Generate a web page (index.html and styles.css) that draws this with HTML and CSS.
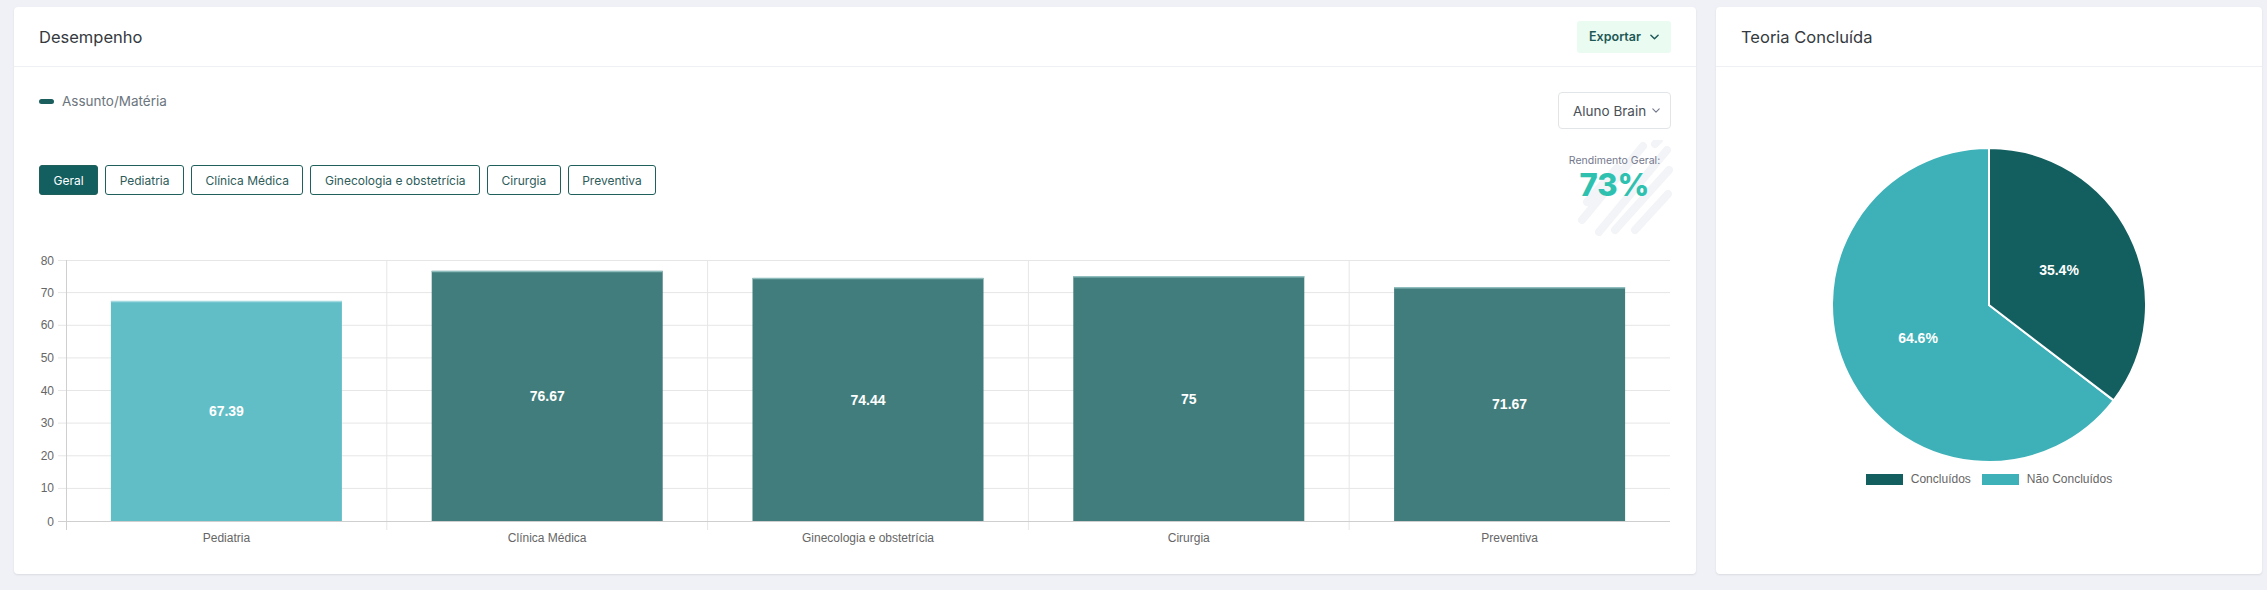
FILE: index.html
```html
<!DOCTYPE html>
<html lang="pt-BR">

<head>
    <meta charset="UTF-8" />
    <meta name="viewport" content="width=device-width, initial-scale=1.0" />
    <title>Desempenho</title>
    <link rel="stylesheet" href="styles.css">
</head>

<body>
    <div class="page">

        <!-- desempenho card -->
        <div class="card card-main">
            <div class="card-header">
                <h4 class="card-title">Desempenho</h4>
                <button class="export-btn">Exportar
                    <svg class="chevron" viewBox="0 0 10 6" width="9" height="6">
                        <path d="M1 1l4 4 4-4" fill="none" stroke="currentColor" stroke-width="1.6" stroke-linecap="round" stroke-linejoin="round" />
                    </svg>
                </button>
            </div>

            <div class="card-body">
                <div class="filters">
                    <div class="filters-left">
                        <div class="legend-item"><span class="legend-dash"></span>Assunto/Matéria</div>
                        <div class="subject-tabs">
                            <button class="tab-btn active">Geral</button>
                            <button class="tab-btn">Pediatria</button>
                            <button class="tab-btn">Clínica Médica</button>
                            <button class="tab-btn">Ginecologia e obstetrícia</button>
                            <button class="tab-btn">Cirurgia</button>
                            <button class="tab-btn">Preventiva</button>
                        </div>
                    </div>

                    <div class="filters-right">
                        <div class="student-select">Aluno Brain
                            <svg class="chevron" viewBox="0 0 10 6" width="8" height="5">
                                <path d="M1 1l4 4 4-4" fill="none" stroke="currentColor" stroke-width="1.4" stroke-linecap="round" stroke-linejoin="round" />
                            </svg>
                        </div>
                        <div class="score">
                            <!-- decorative brush strokes behind the score -->
                            <svg class="score-bg" viewBox="0 0 100 96" width="100" height="96">
                                <g stroke="#f3f4f7" stroke-width="8" stroke-linecap="round">
                                    <line x1="14" y1="62" x2="44" y2="28" />
                                    <line x1="9" y1="80" x2="70" y2="6" />
                                    <line x1="26" y1="92" x2="94" y2="10" />
                                    <line x1="42" y1="90" x2="96" y2="30" />
                                    <line x1="62" y1="90" x2="95" y2="54" />
                                    <line x1="82" y1="4" x2="86" y2="0" />
                                </g>
                            </svg>
                            <span class="score-label">Rendimento Geral:</span>
                            <span class="score-value">73%</span>
                        </div>
                    </div>
                </div>

                <svg class="bar-chart" width="1632" height="310" viewBox="0 0 1632 310">
                    <!-- horizontal grid -->
                    <g stroke="#e6e6e6" stroke-width="1">
                        <line x1="19" y1="15.5" x2="1631" y2="15.5" />
                        <line x1="19" y1="47.6" x2="1631" y2="47.6" />
                        <line x1="19" y1="80.3" x2="1631" y2="80.3" />
                        <line x1="19" y1="112.9" x2="1631" y2="112.9" />
                        <line x1="19" y1="145.5" x2="1631" y2="145.5" />
                        <line x1="19" y1="178.1" x2="1631" y2="178.1" />
                        <line x1="19" y1="210.8" x2="1631" y2="210.8" />
                        <line x1="19" y1="243.4" x2="1631" y2="243.4" />
                    </g>
                    <!-- vertical grid -->
                    <g stroke="#e6e6e6" stroke-width="1">
                        <line x1="347.8" y1="15" x2="347.8" y2="285" />
                        <line x1="668.6" y1="15" x2="668.6" y2="285" />
                        <line x1="989.4" y1="15" x2="989.4" y2="285" />
                        <line x1="1310.2" y1="15" x2="1310.2" y2="285" />
                    </g>
                    <!-- axes -->
                    <g stroke="#cfcfcf" stroke-width="1">
                        <line x1="27.5" y1="15" x2="27.5" y2="285" />
                        <line x1="19" y1="276.5" x2="1631" y2="276.5" />
                    </g>

                    <!-- y labels -->
                    <g class="axis-label" text-anchor="end">
                        <text x="15" y="19.5">80</text>
                        <text x="15" y="51.6">70</text>
                        <text x="15" y="84.3">60</text>
                        <text x="15" y="116.9">50</text>
                        <text x="15" y="149.5">40</text>
                        <text x="15" y="182.1">30</text>
                        <text x="15" y="214.8">20</text>
                        <text x="15" y="247.4">10</text>
                        <text x="15" y="280.5">0</text>
                    </g>

                    <!-- bars -->
                    <rect x="71.9" y="56.1" width="231" height="219.9" fill="#62bec6" />
                    <line x1="71.9" y1="56.6" x2="302.9" y2="56.6" stroke="#a3dbe0" stroke-width="1.5" />
                    <rect x="392.7" y="25.9" width="231" height="250.1" fill="#417d7c" />
                    <line x1="392.7" y1="26.4" x2="623.7" y2="26.4" stroke="#8fbcbc" stroke-width="1.5" />
                    <rect x="713.5" y="33.1" width="231" height="242.9" fill="#417d7c" />
                    <line x1="713.5" y1="33.6" x2="944.5" y2="33.6" stroke="#8fbcbc" stroke-width="1.5" />
                    <rect x="1034.3" y="31.3" width="231" height="244.7" fill="#417d7c" />
                    <line x1="1034.3" y1="31.8" x2="1265.3" y2="31.8" stroke="#8fbcbc" stroke-width="1.5" />
                    <rect x="1355.1" y="42.2" width="231" height="233.8" fill="#417d7c" />
                    <line x1="1355.1" y1="42.7" x2="1586.1" y2="42.7" stroke="#8fbcbc" stroke-width="1.5" />

                    <!-- bar values -->
                    <g class="bar-value" text-anchor="middle">
                        <text x="187.4" y="171">67.39</text>
                        <text x="508.2" y="156">76.67</text>
                        <text x="829" y="159.6">74.44</text>
                        <text x="1149.8" y="158.7">75</text>
                        <text x="1470.6" y="164">71.67</text>
                    </g>

                    <!-- x labels -->
                    <g class="axis-label" text-anchor="middle">
                        <text x="187.4" y="297">Pediatria</text>
                        <text x="508.2" y="297">Clínica Médica</text>
                        <text x="829" y="297">Ginecologia e obstetrícia</text>
                        <text x="1149.8" y="297">Cirurgia</text>
                        <text x="1470.6" y="297">Preventiva</text>
                    </g>
                </svg>
            </div>
        </div>

        <!-- teoria card -->
        <div class="card card-side">
            <div class="card-header">
                <h4 class="card-title">Teoria Concluída</h4>
            </div>

            <div class="pie-body">
                <svg class="pie-chart" width="318" height="318" viewBox="0 0 318 318">
                    <path d="M159 159 L283.7 254.4 A157 157 0 1 1 159 2 Z" fill="#3eb1b8" stroke="#fff" stroke-width="2" stroke-linejoin="round" />
                    <path d="M159 159 L159 2 A157 157 0 0 1 283.7 254.4 Z" fill="#135f60" stroke="#fff" stroke-width="2" stroke-linejoin="round" />
                    <g class="pie-value" text-anchor="middle">
                        <text x="229" y="129">35.4%</text>
                        <text x="88" y="197">64.6%</text>
                    </g>
                </svg>

                <div class="pie-legend">
                    <span class="pie-legend-item"><span class="legend-box dark"></span>Concluídos</span>
                    <span class="pie-legend-item"><span class="legend-box light"></span>Não Concluídos</span>
                </div>
            </div>
        </div>

    </div>
</body>

</html>
```

FILE: styles.css
```css
html,
body {
    margin: 0;
    height: 100%;
    background-color: #f0f1f6;
    font-family: Inter, "Open Sans", sans-serif;
    overflow: hidden;
}

.page {
    display: flex;
    gap: 20px;
    padding: 7px 5px 0 14px;
}

.card {
    background-color: #fff;
    border-radius: 4px;
    box-shadow: 0 1px 2px rgba(56, 65, 74, 0.12);
}

.card-main {
    flex: 0 0 1682px;
}

.card-side {
    flex: 1;
}

.card-header {
    display: flex;
    align-items: center;
    justify-content: space-between;
    height: 60px;
    padding: 0 25px;
    box-sizing: border-box;
    border-bottom: 1px solid #eef0f3;
}

.card-title {
    margin: 0;
    font-size: 16.5px;
    font-weight: 400;
    color: #343a40;
}

.export-btn {
    display: flex;
    align-items: center;
    gap: 9px;
    height: 32px;
    width: 94px;
    justify-content: center;
    background-color: #eafbf2;
    color: #1d5855;
    border: none;
    border-radius: 3px;
    font-family: inherit;
    font-size: 12.5px;
    font-weight: 600;
    cursor: pointer;
}

.card-body {
    padding: 25px 25px 19px 25px;
}

.filters {
    display: flex;
    justify-content: space-between;
    align-items: flex-start;
}

.legend-item {
    display: flex;
    align-items: center;
    gap: 8px;
    height: 18px;
    font-size: 13.5px;
    color: #6c757d;
}

.legend-dash {
    width: 15px;
    height: 5px;
    border-radius: 3px;
    background-color: #1b5e5e;
}

.subject-tabs {
    display: flex;
    gap: 7px;
    margin-top: 55px;
}

.tab-btn {
    height: 30px;
    padding: 0 13.5px;
    background-color: #fff;
    color: #2e5c5a;
    border: 1px solid #1f5f5c;
    border-radius: 3px;
    font-family: inherit;
    font-size: 12px;
    cursor: pointer;
}

.tab-btn.active {
    background-color: #135f5f;
    color: #fff;
}

.filters-right {
    width: 113px;
    display: flex;
    flex-direction: column;
    align-items: center;
}

.student-select {
    display: flex;
    align-items: center;
    justify-content: space-between;
    box-sizing: border-box;
    width: 113px;
    height: 37px;
    padding: 0 10px 0 14px;
    border: 1px solid #e2e5e8;
    border-radius: 4px;
    font-size: 13.5px;
    color: #495057;
}

.student-select .chevron {
    color: #74788d;
}

.score {
    position: relative;
    display: flex;
    flex-direction: column;
    align-items: center;
    margin-top: 24px;
}

.score-bg {
    position: absolute;
    top: -13px;
    left: 4px;
}

.score-label {
    position: relative;
    font-size: 10.5px;
    line-height: 16px;
    color: #74788d;
}

.score-value {
    position: relative;
    font-size: 31px;
    line-height: 32px;
    font-weight: 800;
    color: #2fc1af;
}

.bar-chart {
    display: block;
    margin-top: 44px;
}

.axis-label {
    font-family: "Liberation Sans", Arial, sans-serif;
    font-size: 12px;
    fill: #666;
}

.bar-value {
    font-family: "Liberation Sans", Arial, sans-serif;
    font-size: 14px;
    font-weight: bold;
    fill: #fff;
}

.pie-body {
    display: flex;
    flex-direction: column;
    align-items: center;
    padding-top: 79px;
}

.pie-value {
    font-family: "Liberation Sans", Arial, sans-serif;
    font-size: 14px;
    font-weight: bold;
    fill: #fff;
}

.pie-legend {
    display: flex;
    gap: 11px;
    margin-top: 8px;
    font-family: "Liberation Sans", Arial, sans-serif;
    font-size: 12px;
    color: #666;
}

.pie-legend-item {
    display: flex;
    align-items: center;
    gap: 8px;
}

.legend-box {
    width: 37px;
    height: 11px;
}

.legend-box.dark {
    background-color: #135f60;
}

.legend-box.light {
    background-color: #3eb1b8;
}
```
